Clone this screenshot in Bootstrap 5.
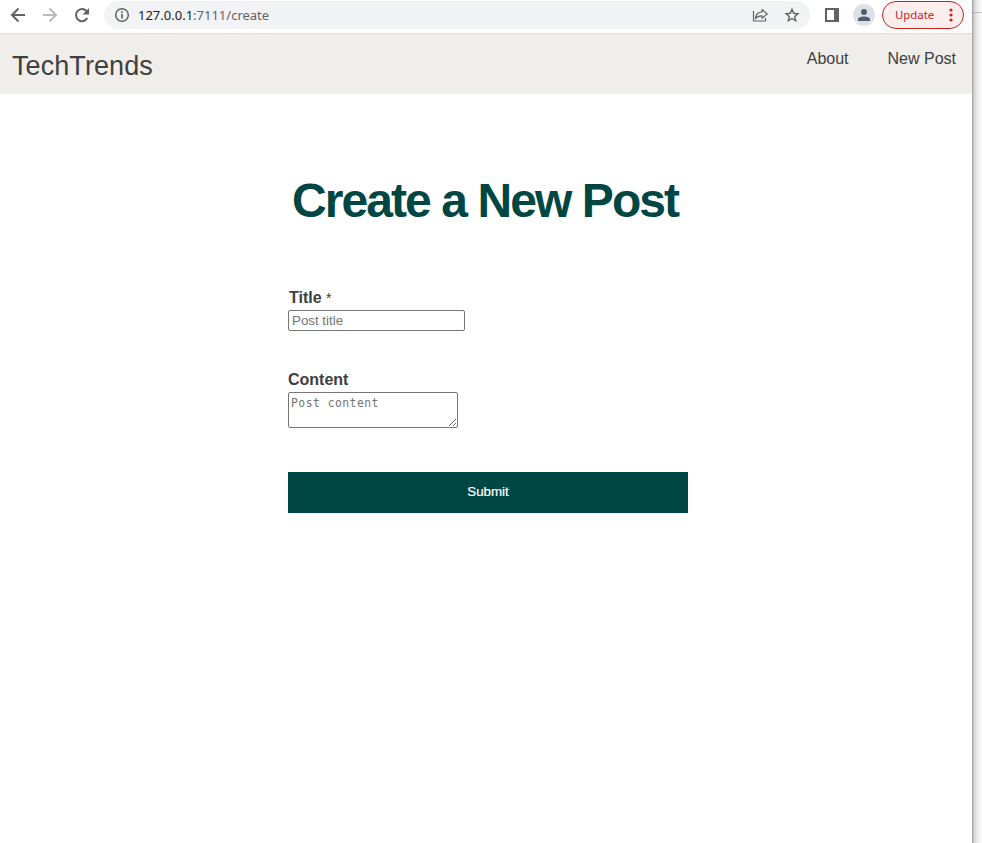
<!DOCTYPE html>
<html lang="en">
<head>
<meta charset="utf-8">
<meta name="viewport" content="width=device-width, initial-scale=1">
<title>TechTrends</title>
<link href="https://cdn.jsdelivr.net/npm/bootstrap@5.3.0/dist/css/bootstrap.min.css" rel="stylesheet">
<style>
body{font-family:"Liberation Sans",Arial,sans-serif;color:#404040;height:843px;line-height:1.2}
.window{width:972px}
.desktop-edge{width:10px;background:linear-gradient(90deg,#9c9c9c 0,#b8b8b8 1px,#d2d2d2 2px,#e2e2e2 4px,#f5f5f5 8px,#fafafa 10px)}
.desktop-edge hr{margin:12px 0 0;border-color:#999;opacity:.5}
.toolbar{height:34px;padding:0 8px 4px 10px;border-bottom:1px solid #dadce0;font-family:"Noto Sans","Open Sans",sans-serif}
.toolbar svg{display:block;flex:none}
.address{width:706px;height:28px;background:#f1f3f4;margin-left:14px;padding:0 10px;font-size:13px;color:#5f6368}
.address .url{margin-left:8px;padding-top:2px}
.address .host{color:#202124}
.avatar{width:22px;height:22px;background:#dee1e6;margin-left:14px;overflow:hidden}
.update{width:82px;height:28px;border:1px solid #c5221f;background:#fceeed;color:#c5221f;margin-left:7px;padding:0 10px 0 12px;font-size:11.4px}
.update span{padding-top:1px}
.site-nav{height:60px;background:#f0eeea;padding:0 16px 0 12px}
.site-name{font-size:27px;line-height:32px;margin-top:16px;color:#404040;letter-spacing:.08px}
.site-links{gap:39px;margin-top:15px}
.site-links a{color:#404040;text-decoration:none;font-size:16px;line-height:19px}
.post-form{width:400px;margin-left:288px;padding-top:78px}
.page-title{font-size:48px;font-weight:700;letter-spacing:-1.92px;line-height:58px;color:#004643;margin:0 0 58px 4px}
.post-form label{display:block;font-size:16px;font-weight:700;line-height:20px;margin-bottom:2px}
.title-label{padding-left:1px}
.title-label span{font-size:14px}
.post-form input,.post-form textarea{display:block;border:1px solid #767676;border-radius:2px;background:#fff}
.post-form input{width:177px;height:21px;padding:1px 3px;font-size:13.333px;margin-bottom:39px}
.post-form textarea{width:170px;height:36px;padding:3px 2px 1px;font:11.4px/15px "DejaVu Sans Mono",monospace;letter-spacing:.47px;resize:both}
.post-form ::placeholder{color:#757575}
.submit{height:41px;margin-top:44px;background:#004643;color:#fff;font-size:13.333px;border:0;padding:0 0 2px;-webkit-text-stroke:.2px #fff}
</style>
<script src="https://cdn.jsdelivr.net/npm/bootstrap@5.3.0/dist/js/bootstrap.bundle.min.js"></script>
</head>
<body class="d-flex overflow-hidden bg-white">
<div class="window">
  <div class="toolbar d-flex align-items-center">
    <svg width="16" height="16" viewBox="0 0 16 16" fill="none" stroke="#5f6368" stroke-width="2"><path d="M15 8H2.500M8.500 1.500L2 8l6.500 6.500"/></svg>
    <svg class="ms-3" width="16" height="16" viewBox="0 0 16 16" fill="none" stroke="#bababa" stroke-width="2"><path d="M1 8h12.500M7.500 1.500L14 8l-6.500 6.500"/></svg>
    <svg class="ms-3" width="16" height="16" viewBox="0 0 16 16"><path d="M13.300 11A6 6 0 1 1 12.400 4" fill="none" stroke="#5f6368" stroke-width="2"/><path d="M15 1v6.500H8.500z" fill="#5f6368"/></svg>
    <div class="address rounded-pill d-flex align-items-center">
      <svg width="16" height="16" viewBox="0 0 16 16" fill="none" stroke="#5f6368"><circle cx="8" cy="8" r="6.300" stroke-width="1.500"/><path d="M8 7v4.500M8 4.300v1.800" stroke-width="1.700"/></svg>
      <span class="url"><span class="host">127.0.0.1</span>:7111/create</span>
      <svg class="ms-auto" width="16" height="16" viewBox="0 0 16 16" fill="none" stroke="#5f6368" stroke-width="1.200"><path d="M1.500 4v10h12v-3"/><path d="M10 2.500L15.200 7 10 11.300V8.800C6.700 8.600 4.900 9.600 3.500 11.600c.300-4 2.700-6.400 6.500-6.700z" stroke-linejoin="round"/></svg>
      <svg class="ms-3" width="16" height="16" viewBox="0 0 16 16" fill="none" stroke="#5f6368" stroke-width="1.400"><path d="M8 2.300l1.700 4 4.300.400-3.300 2.800 1 4.300L8 11.500l-3.700 2.300 1-4.300L2 6.700l4.300-.400z"/></svg>
    </div>
    <svg width="14" height="14" viewBox="0 0 14 14" style="margin-left:15px"><path d="M0 0h14v14H0zM2 2v10h7V2z" fill="#5f6368" fill-rule="evenodd"/></svg>
    <div class="avatar rounded-circle"><svg width="22" height="22" viewBox="0 0 22 22" fill="#535d72"><circle cx="11" cy="8" r="3"/><path d="M5 17v-1.500C5 13.300 8.500 12.500 11 12.500s6 .800 6 3V17z"/></svg></div>
    <div class="update rounded-pill d-flex align-items-center justify-content-between">
      <span>Update</span>
      <svg width="4" height="14" viewBox="0 0 4 14" fill="#c5221f"><circle cx="2" cy="2" r="1.600"/><circle cx="2" cy="7" r="1.600"/><circle cx="2" cy="12" r="1.600"/></svg>
    </div>
  </div>
  <nav class="site-nav d-flex justify-content-between align-items-start">
    <div class="site-name">TechTrends</div>
    <div class="site-links d-flex"><a href="#">About</a><a href="#">New Post</a></div>
  </nav>
  <main>
    <form class="post-form">
      <h1 class="page-title text-nowrap">Create a New Post</h1>
      <label class="title-label" for="title">Title <span class="fw-normal">*</span></label>
      <input id="title" type="text" placeholder="Post title">
      <label for="content">Content</label>
      <textarea id="content" placeholder="Post content"></textarea>
      <button class="submit w-100 d-block" type="button">Submit</button>
    </form>
  </main>
</div>
<div class="desktop-edge"><hr></div>
</body>
</html>
